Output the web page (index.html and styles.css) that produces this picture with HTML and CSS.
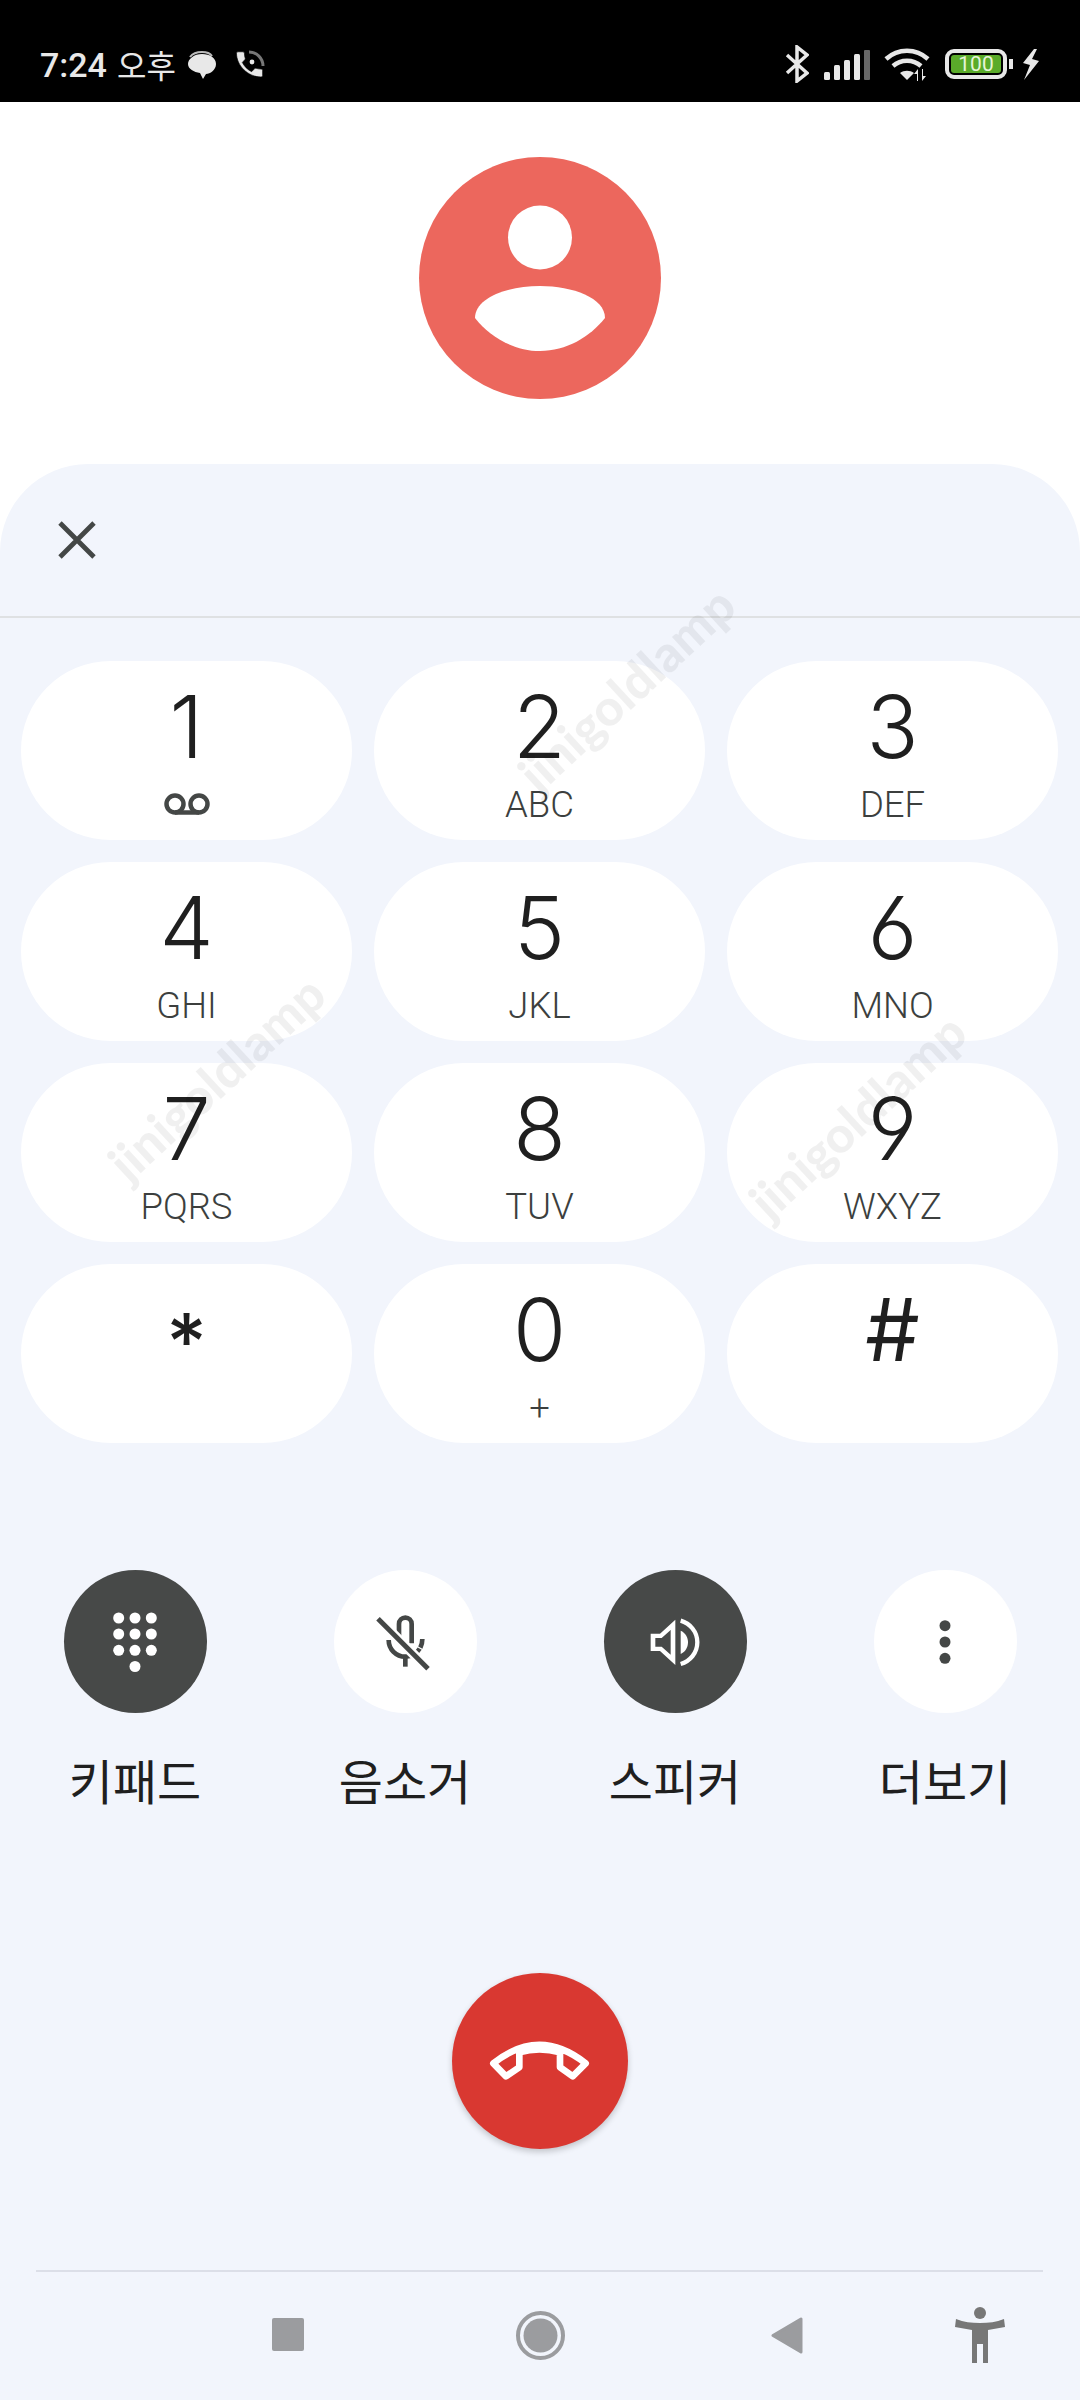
FILE: index.html
```html
<!DOCTYPE html>
<html lang="ko">
<head>
    <meta charset="UTF-8">
    <meta name="viewport" content="width=device-width, initial-scale=1.0">
    <title>통화</title>
    <link rel="stylesheet" href="styles.css">
</head>
<body>
    <div class="status-bar">
        <div class="status-left">
            <span class="clock">7:24</span>
            <span class="ampm">오후</span>
            <svg class="ic-msg" width="30" height="30" viewBox="0 0 30 30">
                <path d="M3 7c3-4 8-5 12-5s8 1 10 4" fill="none" stroke="#bbb" stroke-width="2"/>
                <path d="M15 4c8 0 14 4 14 10s-6 10-10 10l-3 5-3-6C7 22 1 19 1 14S7 4 15 4z" fill="#e8e8e8"/>
            </svg>
            <svg class="ic-call" width="30" height="30" viewBox="0 0 30 30">
                <path d="M14 2a14 14 0 0 1 14 14" fill="none" stroke="#777" stroke-width="3"/>
                <circle cx="17" cy="12" r="2.400" fill="#e8e8e8"/>
                <path d="M7.300 12.400c2 4 5.300 7.300 9.300 9.300l3.100-3.100c.4-.4 1-.5 1.400-.3 1.600.5 3.300.8 5.100.8.800 0 1.400.6 1.400 1.400v5.100c0 .8-.6 1.400-1.400 1.400C12.900 27 1.500 15.600 1.500 3.200c0-.8.600-1.400 1.400-1.400H8c.8 0 1.400.6 1.400 1.400 0 1.800.3 3.500.8 5.100.2.500 0 1-.4 1.400z" fill="#e8e8e8" stroke="#000" stroke-width=".6"/>
            </svg>
        </div>
        <div class="status-right">
            <svg class="ic-bt" width="24" height="38" viewBox="0 0 24 38">
                <path d="M2 10l20 18-10 8V2l10 8L2 28" fill="none" stroke="#e8e8e8" stroke-width="3.500"/>
            </svg>
            <svg class="ic-signal" width="48" height="30" viewBox="0 0 48 30">
                <rect x="1" y="22" width="6" height="8" rx="1.500" fill="#e8e8e8"/>
                <rect x="11" y="15" width="6" height="15" rx="1.500" fill="#e8e8e8"/>
                <rect x="21" y="10" width="6" height="20" rx="1.500" fill="#e8e8e8"/>
                <rect x="31" y="4" width="6" height="26" rx="1.500" fill="#e8e8e8"/>
                <rect x="41" y="0" width="6" height="30" rx="1" fill="#666"/>
            </svg>
            <svg class="ic-wifi" width="46" height="35" viewBox="0 0 46 35">
                <path d="M2 12c12-11 30-11 42 0" fill="none" stroke="#e8e8e8" stroke-width="4.500"/>
                <path d="M9 19c8-7 20-7 28 0" fill="none" stroke="#e8e8e8" stroke-width="4.500"/>
                <path d="M16 26c4-3 10-3 14 0l-7 7z" fill="#e8e8e8"/>
                <path d="M33 34v-7h-3l4-5v12zM38 22v12l4-5h-3v-7z" fill="#e8e8e8"/>
            </svg>
            <div class="battery">
                <div class="battery-body"><span class="battery-level">100</span></div>
                <div class="battery-nub"></div>
            </div>
            <svg class="ic-bolt" width="18" height="31" viewBox="0 0 18 31">
                <path d="M12 0L1 14l7 2-6 15 15-19-7-2 5-10z" fill="#e8e8e8"/>
            </svg>
        </div>
    </div>

    <div class="contact">
        <div class="avatar">
            <svg width="242" height="242" viewBox="0 0 242 242">
                <circle cx="121" cy="80.500" r="32" fill="#fff"/>
                <path d="M56 161c0-20 32-32 65-32s65 12 65 32c-15 19-39 33-65 33s-50-14-65-33z" fill="#fff"/>
            </svg>
        </div>
    </div>

    <div class="panel">
        <div class="panel-head">
            <svg width="38" height="38" viewBox="0 0 38 38">
                <path d="M2 2l34 34M36 2L2 36" fill="none" stroke="#444746" stroke-width="4.800"/>
            </svg>
        </div>

        <div class="keypad">
            <div class="key">
                <span class="digit">1</span>
                <svg class="ic-voicemail" width="46" height="22" viewBox="0 0 46 22">
                    <circle cx="11" cy="11" r="8.500" fill="none" stroke="#444746" stroke-width="4.500"/>
                    <circle cx="35" cy="11" r="8.500" fill="none" stroke="#444746" stroke-width="4.500"/>
                    <path d="M11 19.500h24" stroke="#444746" stroke-width="4.500"/>
                </svg>
            </div>
            <div class="key"><span class="digit">2</span><span class="letters">ABC</span></div>
            <div class="key"><span class="digit plain">3</span><span class="letters">DEF</span></div>
            <div class="key"><span class="digit plain">4</span><span class="letters">GHI</span></div>
            <div class="key"><span class="digit">5</span><span class="letters">JKL</span></div>
            <div class="key"><span class="digit">6</span><span class="letters">MNO</span></div>
            <div class="key"><span class="digit">7</span><span class="letters">PQRS</span></div>
            <div class="key"><span class="digit">8</span><span class="letters">TUV</span></div>
            <div class="key"><span class="digit">9</span><span class="letters">WXYZ</span></div>
            <div class="key"><span class="digit star">*</span></div>
            <div class="key"><span class="digit">0</span><span class="letters">+</span></div>
            <div class="key"><span class="digit hash">#</span></div>
        </div>

        <div class="actions">
            <div class="action">
                <div class="action-btn dark">
                    <svg width="60" height="70" viewBox="0 0 60 70" fill="#fff">
                        <circle cx="13.700" cy="11" r="5.500"/><circle cx="30" cy="11" r="5.500"/><circle cx="46.300" cy="11" r="5.500"/>
                        <circle cx="13.700" cy="27" r="5.500"/><circle cx="30" cy="27" r="5.500"/><circle cx="46.300" cy="27" r="5.500"/>
                        <circle cx="13.700" cy="43.300" r="5.500"/><circle cx="30" cy="43.300" r="5.500"/><circle cx="46.300" cy="43.300" r="5.500"/>
                        <circle cx="30" cy="59.500" r="5.500"/>
                    </svg>
                </div>
                <span class="action-label">키패드</span>
            </div>
            <div class="action">
                <div class="action-btn">
                    <svg width="60" height="60" viewBox="1036 214 180 180" fill="none" stroke="#444746" stroke-width="14">
                        <path d="M1108 290v-40a19 19 0 0 1 38 0v58"/>
                        <path d="M1077 298c0 28 22 50 50 50 18 0 34-9 43-24"/>
                        <path d="M1178 295c0 10-2 18-6 26"/>
                        <path d="M1127 348v30"/>
                        <path d="M1045 234l150 150" stroke="#fff" stroke-width="30"/>
                        <path d="M1045 234l150 150" stroke-width="15"/>
                    </svg>
                </div>
                <span class="action-label">음소거</span>
            </div>
            <div class="action">
                <div class="action-btn dark">
                    <svg width="60" height="60" viewBox="256 214 180 180" fill="#fff">
                        <path fill-rule="evenodd" d="M273 279h28l46-42v136l-46-42h-28zM287 292v26h19l27 24v-74l-27 24z"/>
                        <path d="M363 270c14 6 22 20 22 35s-8 29-22 35z"/>
                        <path d="M363 240c28 8 50 33 50 65s-22 57-50 65" fill="none" stroke="#fff" stroke-width="13"/>
                    </svg>
                </div>
                <span class="action-label">스피커</span>
            </div>
            <div class="action">
                <div class="action-btn">
                    <svg width="60" height="60" viewBox="0 0 60 60" fill="#444746">
                        <circle cx="30" cy="13.700" r="5.500"/><circle cx="30" cy="30" r="5.500"/><circle cx="30" cy="46.300" r="5.500"/>
                    </svg>
                </div>
                <span class="action-label">더보기</span>
            </div>
        </div>

        <div class="end-call">
            <div class="end-btn">
                <svg width="104" height="44" viewBox="204 262 312 132" fill="none" stroke="#fff" stroke-width="20" stroke-linejoin="round">
                    <path d="M220 335Q358 225 497 335L458 374 420 347V302Q358 285 298 302V347L258 374Z"/>
                </svg>
            </div>
        </div>

        <div class="nav-bar">
            <div class="nav-square"></div>
            <svg class="nav-home" width="49" height="49" viewBox="0 0 49 49">
                <circle cx="24.500" cy="24.500" r="22.500" fill="none" stroke="#9b9c9f" stroke-width="4"/>
                <circle cx="24.500" cy="24.500" r="17" fill="#9b9c9f"/>
            </svg>
            <svg class="nav-back" width="32" height="37" viewBox="0 0 32 37">
                <path d="M30 2v33L2 18.500z" fill="#9b9c9f" stroke="#9b9c9f" stroke-width="3" stroke-linejoin="round"/>
            </svg>
            <svg class="nav-a11y" width="50" height="56" viewBox="0 0 50 56">
                <ellipse cx="25" cy="6" rx="6" ry="6" fill="#777"/>
                <path fill-rule="evenodd" d="M1 12c8 3 15 4 24 4s16-1 24-4l1 8-17 3v33h-5V37h-6v19h-5V23L0 20z" fill="#777"/>
            </svg>
        </div>
    </div>

    <div class="watermark wm-a">jinigoldlamp</div>
    <div class="watermark wm-b">jinigoldlamp</div>
    <div class="watermark wm-c">jinigoldlamp</div>
</body>
</html>
```

FILE: styles.css
```css
body {
    margin: 0;
    padding: 0;
    width: 1080px;
    height: 2400px;
    position: relative;
    overflow: hidden;
    background: #fff;
    font-family: 'Roboto', 'Noto Sans CJK KR', sans-serif;
}

/* status bar */
.status-bar {
    height: 102px;
    background: #000;
    color: #e8e8e8;
    display: flex;
    justify-content: space-between;
    box-sizing: border-box;
    padding: 0 40px;
}

.status-left {
    display: flex;
    align-items: center;
    padding-top: 28px;
}

.clock {
    font-size: 34px;
    font-weight: 500;
    line-height: 36px;
}

.ampm {
    font-family: 'Noto Sans CJK KR', sans-serif;
    font-size: 32px;
    line-height: 36px;
    margin: 0 0 3px 10px;
}

.ic-msg {
    margin-left: 11px;
}

.ic-call {
    margin-left: 18px;
}

.status-right {
    display: flex;
    align-items: flex-start;
}

.ic-bt {
    margin-top: 45px;
}

.ic-signal {
    margin: 50px 0 0 14px;
}

.ic-wifi {
    margin: 47px 0 0 13px;
}

.battery {
    display: flex;
    align-items: center;
    margin: 49px 0 0 15px;
}

.battery-body {
    width: 62px;
    height: 30px;
    box-sizing: border-box;
    border: 4px solid #e8e8e8;
    border-radius: 9px;
    padding: 2px;
}

.battery-level {
    display: block;
    height: 18px;
    background: #5aab2a;
    border-radius: 3px;
    color: #e6f5d8;
    font-size: 21px;
    line-height: 18px;
    text-align: center;
}

.battery-nub {
    width: 4px;
    height: 10px;
    background: #e8e8e8;
    margin-left: 2px;
}

.ic-bolt {
    margin: 49px 0 0 9px;
}

/* contact */
.contact {
    height: 362px;
    display: flex;
    justify-content: center;
    padding-top: 55px;
    box-sizing: border-box;
}

.avatar {
    width: 242px;
    height: 242px;
    background: #ec675d;
    border-radius: 50%;
}

.avatar svg {
    display: block;
}

/* lower panel */
.panel {
    height: 1936px;
    background: #f2f5fc;
    border-radius: 88px 88px 0 0;
}

.panel-head {
    height: 154px;
    box-sizing: border-box;
    border-bottom: 2px solid #dfe1e3;
    padding: 57px 0 0 58px;
}

.panel-head svg {
    display: block;
}

.keypad {
    display: grid;
    grid-template-columns: repeat(3, 331px);
    grid-auto-rows: 179px;
    gap: 22px;
    padding: 43px 0 0 21px;
}

.key {
    background: #fff;
    border-radius: 90px;
    display: flex;
    flex-direction: column;
    align-items: center;
    padding-top: 22px;
    box-sizing: border-box;
}

.digit {
    font-family: 'Inter', sans-serif;
    font-feature-settings: 'ss01';
    font-size: 86px;
    font-weight: 350;
    line-height: 88px;
    color: #1f1f1f;
}

.digit.plain {
    font-feature-settings: normal;
}

.digit.star {
    font-size: 78px;
    font-weight: 500;
    padding-top: 12px;
}

.digit.hash {
    font-weight: 400;
}

.letters {
    font-size: 36.500px;
    font-weight: 300;
    line-height: 36px;
    margin-top: 16px;
    color: #3c3f3e;
}

.ic-voicemail {
    margin-top: 22px;
}

/* call actions */
.actions {
    display: grid;
    grid-template-columns: repeat(4, 270px);
    margin-top: 127px;
}

.action {
    display: flex;
    flex-direction: column;
    align-items: center;
}

.action-btn {
    width: 143px;
    height: 143px;
    border-radius: 50%;
    background: #fff;
    display: flex;
    align-items: center;
    justify-content: center;
}

.action-btn.dark {
    background: #474948;
}

.action-label {
    font-family: 'Noto Sans CJK KR', sans-serif;
    font-size: 48px;
    line-height: 60px;
    margin-top: 36px;
    color: #1f1f1f;
}

.end-call {
    display: flex;
    justify-content: center;
    margin-top: 164px;
}

.end-btn {
    width: 176px;
    height: 176px;
    border-radius: 50%;
    background: #d93831;
    box-shadow: 0 3px 6px rgba(0, 0, 0, 0.2);
    display: flex;
    align-items: center;
    justify-content: center;
}

/* system navigation */
.nav-bar {
    display: flex;
    align-items: flex-start;
    margin: 121px 37px 0 36px;
    border-top: 2px solid #dcdfe8;
    height: 128px;
}

.nav-square {
    width: 32px;
    height: 33px;
    background: #9b9c9f;
    border-radius: 2px;
    margin: 46px 0 0 236px;
}

.nav-home {
    margin: 39px 0 0 212px;
}

.nav-back {
    margin: 45px 0 0 206px;
}

.nav-a11y {
    margin: 35px 0 0 152px;
}

/* watermark over the keypad */
.watermark {
    position: absolute;
    font-family: 'Lato', sans-serif;
    font-weight: 900;
    font-size: 50px;
    line-height: 50px;
    color: rgba(0, 0, 0, 0.06);
    transform: rotate(-42.700deg);
    transform-origin: left center;
    white-space: nowrap;
}

.wm-a {
    left: 526px;
    top: 756px;
}

.wm-b {
    left: 116px;
    top: 1145px;
}

.wm-c {
    left: 757px;
    top: 1183px;
}
```
